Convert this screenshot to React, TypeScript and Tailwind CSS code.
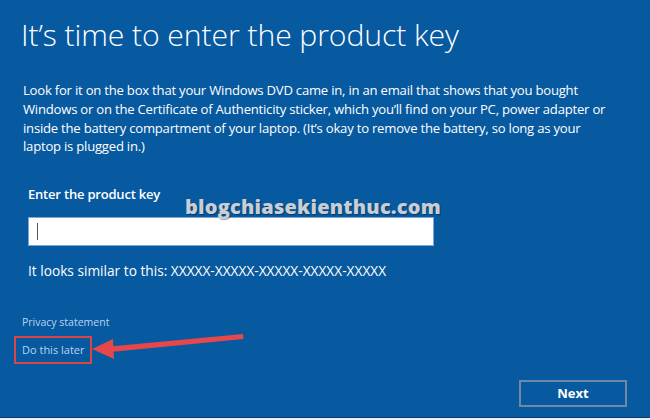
export default function App() {
  return (
    <div
      className="relative w-[650px] h-[420px] overflow-hidden bg-[#0759a0] text-white flex flex-col"
      style={{ fontFamily: '"Open Sans", "Noto Sans", sans-serif' }}
    >
      {/* Title */}
      <h1 className="pl-[21px] pt-[17px] text-[30.2px] font-light leading-[36px] tracking-[-0.1px]">
        It’s time to enter the product key
      </h1>

      {/* Description */}
      <p className="pl-[23px] pt-[28px] text-[13.1px] leading-[18.8px] tracking-[-0.22px]">
        Look for it on the box that your Windows DVD came in, in an email that shows that you bought
        <br />
        Windows or on the Certificate of Authenticity sticker, which you’ll find on your PC, power adapter or
        <br />
        inside the battery compartment of your laptop. (It’s okay to remove the battery, so long as your
        <br />
        laptop is plugged in.)
      </p>

      {/* Product key field */}
      <div className="pl-[28px] pt-[29px] flex flex-col">
        <label className="text-[13px] font-semibold leading-[18px] tracking-[-0.2px]">Enter the product key</label>
        <div className="mt-[14px] w-[406px] h-[29px] bg-white border border-[#7fa6d0] flex items-center pl-[8px]">
          <span className="w-px h-[17px] bg-[#555]" />
        </div>
        <p className="mt-[16px] text-[13.7px] leading-[18px]">
          It looks similar to this: XXXXX-XXXXX-XXXXX-XXXXX-XXXXX
        </p>
      </div>

      {/* Links */}
      <div className="pl-[22px] pt-[34px] flex flex-col items-start text-[10.5px] text-[#b9d4f0]">
        <span className="leading-[16px]">Privacy statement</span>
        <span className="mt-[6px] -ml-[8px] px-[6px] py-[4px] border-2 border-[#d9464a] leading-[16px] text-[11px]">
          Do this later
        </span>
      </div>

      {/* Next button */}
      <div className="flex justify-end pr-[23px] mt-auto mb-[10px]">
        <button className="w-[108px] h-[27px] border-2 border-[#6e88a6] text-[13px] font-bold text-white">
          Next
        </button>
      </div>
      <div className="h-px bg-[#0b3d6e]" />
      <div className="h-[2px] bg-[#e8eef4]" />

      {/* Watermark */}
      <span
        className="absolute left-[185px] top-[192px] text-[20px] font-extrabold text-[#c9ced6] tracking-[0.2px]"
        style={{ fontFamily: '"Open Sans", sans-serif', textShadow: '1px 1px 1px rgba(0,0,0,0.35)' }}
      >
        blogchiasekienthuc.com
      </span>

      {/* Arrow */}
      <svg className="absolute left-[88px] top-[326px]" width="160" height="36" viewBox="0 0 160 36">
        <path d="M22 20.5 L155 8 L155.5 13 L22.5 26 Z" fill="#e5474b" />
        <path d="M4 23 L25 13 L26 33 Z" fill="#e5474b" />
      </svg>
    </div>
  );
}
